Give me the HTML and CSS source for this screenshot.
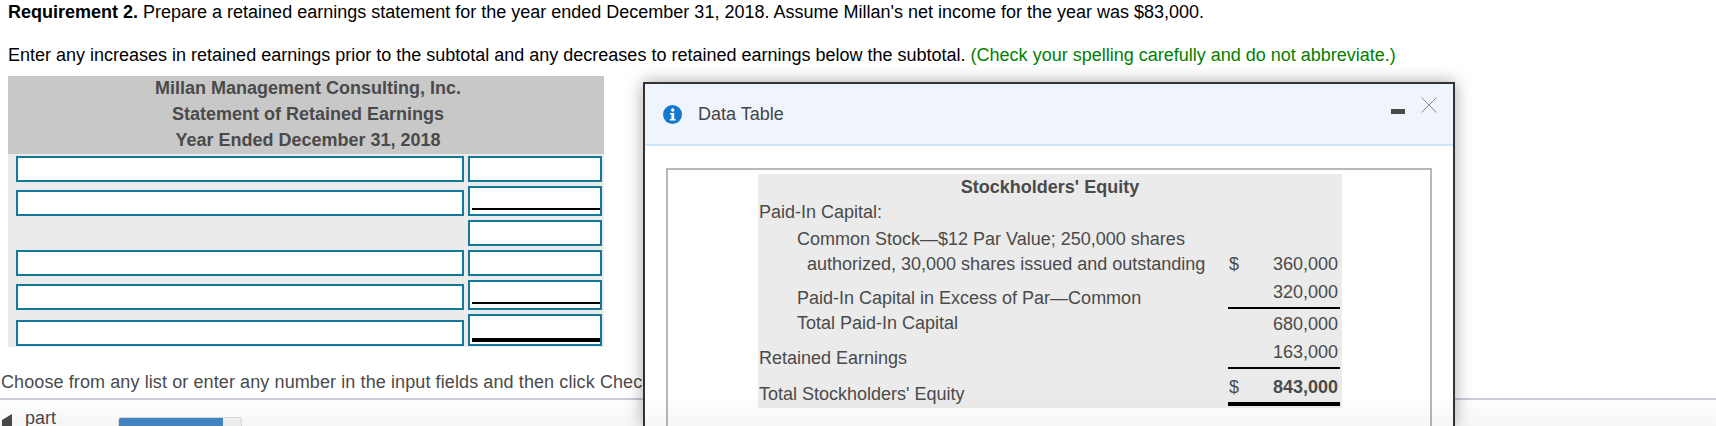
FILE: index.html
```html
<!DOCTYPE html>
<html lang="en">
<head>
    <meta charset="UTF-8">
    <title>Requirement 2</title>
    <link rel="stylesheet" href="styles.css">
</head>
<body>
    <p class="req"><strong>Requirement 2.</strong> Prepare a retained earnings statement for the year ended December 31, 2018. Assume Millan's net income for the year was $83,000.</p>
    <p class="intro">Enter any increases in retained earnings prior to the subtotal and any decreases to retained earnings below the subtotal. <span class="hint">(Check your spelling carefully and do not abbreviate.)</span></p>

    <div class="statement">
        <div class="statement-head">
            <div>Millan Management Consulting, Inc.</div>
            <div>Statement of Retained Earnings</div>
            <div>Year Ended December 31, 2018</div>
        </div>
        <div class="statement-row row-a">
            <div class="field name"></div>
            <div class="field amount"></div>
        </div>
        <div class="statement-row row-b">
            <div class="field name"></div>
            <div class="field amount tall"><i class="rule"></i></div>
        </div>
        <div class="statement-row row-c">
            <div class="field amount only"></div>
        </div>
        <div class="statement-row row-d">
            <div class="field name"></div>
            <div class="field amount"></div>
        </div>
        <div class="statement-row row-e">
            <div class="field name"></div>
            <div class="field amount tall"><i class="rule"></i></div>
        </div>
        <div class="statement-row row-f">
            <div class="field name"></div>
            <div class="field amount taller"><i class="rule thick"></i></div>
        </div>
    </div>

    <p class="choose">Choose from any list or enter any number in the input fields and then click Check Answer.</p>

    <div class="footer">
        <div class="part">
            <svg class="part-arrow" width="12" height="14" viewBox="0 0 12 14"><path d="M1 7 L11 1 V14 H1 Z" fill="#4a4a4a"/></svg>
            <span>part</span>
        </div>
        <div class="progress"><div class="progress-fill"></div></div>
    </div>

    <div class="modal">
        <div class="modal-head">
            <svg class="info" width="19" height="19" viewBox="0 0 19 19">
                <circle cx="9.5" cy="9.5" r="9.5" fill="#1578cc"/>
                <circle cx="9.7" cy="5" r="1.7" fill="#fff"/>
                <path d="M7 8h4.2v6H12.6v1.6H6.8V14h1.6V9.6H7z" fill="#fff"/>
            </svg>
            <span class="modal-title">Data Table</span>
            <span class="minimize"></span>
            <svg class="close" width="16" height="16" viewBox="0 0 16 16"><path d="M.5.5l15 15M15.500.5l-15 15" stroke="#8a8a8a" stroke-width="1" fill="none"/></svg>
        </div>
        <div class="modal-body">
            <div class="panel">
                <table class="equity">
                    <colgroup>
                        <col class="col-label">
                        <col class="col-cur">
                        <col class="col-num">
                        <col class="col-gap">
                    </colgroup>
                    <tr class="r-title"><th colspan="4">Stockholders' Equity</th></tr>
                    <tr class="r-paid"><td colspan="4">Paid-In Capital:</td></tr>
                    <tr class="r-common"><td class="ind" colspan="4">Common Stock—$12 Par Value; 250,000 shares</td></tr>
                    <tr class="r-auth"><td class="ind2">authorized, 30,000 shares issued and outstanding</td><td class="cur">$</td><td class="num">360,000</td><td></td></tr>
                    <tr class="r-low"><td class="ind low">Paid-In Capital in Excess of Par—Common</td><td class="cur line"></td><td class="num line up">320,000</td><td></td></tr>
                    <tr class="r-sub"><td class="ind">Total Paid-In Capital</td><td class="cur"></td><td class="num">680,000</td><td></td></tr>
                    <tr class="r-low2"><td class="low">Retained Earnings</td><td class="cur line"></td><td class="num line up">163,000</td><td></td></tr>
                    <tr class="r-total"><td class="low">Total Stockholders' Equity</td><td class="cur line2 up">$</td><td class="num line2 up"><b>843,000</b></td><td></td></tr>
                    <tr class="r-pad"><td colspan="4"></td></tr>
                </table>
            </div>
        </div>
    </div>
    <div class="fade"></div>
</body>
</html>
```

FILE: styles.css
```css
html, body {
    height: 426px;
    overflow: hidden;
}
body {
    margin: 0;
    font-family: "Liberation Sans", Arial, sans-serif;
    font-size: 18px;
    color: #000;
    background-color: #fff;
    position: relative;
}
p {
    margin: 0;
}
.req {
    padding: 2px 0 0 8px;
    line-height: 20px;
}
.intro {
    padding: 23px 0 0 8px;
    line-height: 20px;
}
.hint {
    color: #008000;
}

/* statement */
.statement {
    width: 596px;
    margin: 11px 0 0 8px;
    background-color: #ebebeb;
    height: 271px;
}
.statement-head {
    background-color: #c8c8c8;
    color: #4a4a4a;
    font-weight: bold;
    text-align: center;
    height: 78px;
    box-sizing: border-box;
    padding-left: 4px;
    display: flex;
    flex-direction: column;
    gap: 2px;
    line-height: 24px;
}
.statement-row {
    display: flex;
    justify-content: flex-end;
    align-items: flex-end;
    gap: 4px;
    padding-right: 2px;
}
.row-a { height: 28px; }
.row-b { height: 34px; }
.row-c { height: 30px; }
.row-d { height: 30px; }
.row-e { height: 34px; }
.row-f { height: 36px; }
.field {
    box-sizing: border-box;
    height: 26px;
    border: 2px solid #13799c;
    background-color: #fff;
    position: relative;
}
.name {
    width: 448px;
}
.amount {
    width: 134px;
}
.tall {
    height: 30px;
}
.taller {
    height: 32px;
}
.rule {
    position: absolute;
    left: 2px;
    right: 0;
    bottom: 4px;
    height: 2px;
    background-color: #000;
}
.rule.thick {
    height: 4px;
    bottom: 2px;
}

.choose {
    position: relative;
    padding: 25px 0 0 1px;
    line-height: 20px;
    letter-spacing: 0.1px;
    color: #4a4a4a;
    white-space: nowrap;
}

/* bottom strip */
.footer {
    position: absolute;
    left: 0;
    right: 0;
    top: 398px;
    height: 28px;
    box-sizing: border-box;
    border-top: 2px solid #c8ccd8;
    display: flex;
    align-items: flex-start;
}
.part {
    width: 118px;
    display: flex;
    align-items: flex-start;
    color: #4a4a4a;
}
.part-arrow {
    margin: 13px 12px 0 1px;
}
.part span {
    line-height: 20px;
    margin-top: 8px;
}
.progress {
    width: 124px;
    height: 20px;
    margin-top: 17px;
    box-sizing: border-box;
    background-color: #f4f4f4;
    border: 1px solid #ddd;
    border-radius: 3px;
    overflow: hidden;
}
.progress-fill {
    width: 104px;
    height: 100%;
    background-color: #4488c8;
}

/* data table window */
.modal {
    position: absolute;
    left: 643px;
    top: 82px;
    width: 812px;
    height: 344px;
    box-sizing: border-box;
    border: 2px solid #333;
    border-bottom: 0;
    background-color: #fff;
    box-shadow: 0 0 16px rgba(0,0,0,0.35);
}
.modal-head {
    box-sizing: border-box;
    height: 62px;
    background-color: #f0f5fd;
    border-bottom: 2px solid #cfe6f8;
    display: flex;
    align-items: center;
    position: relative;
}
.info {
    margin-left: 18px;
}
.modal-title {
    margin-left: 16px;
    color: #444;
}
.minimize {
    position: absolute;
    left: 746px;
    top: 25px;
    width: 14px;
    height: 5px;
    background-color: #4a4a4a;
}
.close {
    position: absolute;
    left: 776px;
    top: 13px;
}
.modal-body {
    padding: 22px 21px 0;
}
.panel {
    border: 2px solid #b8b8b8;
    border-bottom: 0;
    height: 256px;
    padding: 4px 0 0 90px;
}
.equity {
    border-collapse: collapse;
    width: 584px;
    background-color: #ebebeb;
    color: #4a4a4a;
    table-layout: fixed;
}
.col-label { width: 470px; }
.col-cur { width: 32px; }
.col-num { width: 80px; }
.col-gap { width: 2px; }
.equity th, .equity td {
    box-sizing: border-box;
    padding: 0 0 0 1px;
    line-height: 20px;
    white-space: nowrap;
}
.r-title th {
    height: 25px;
    padding: 0;
}
.r-paid td {
    height: 25px;
}
.r-common td {
    height: 27px;
    padding-top: 2px;
}
.r-auth td {
    height: 26px;
}
.equity td.ind {
    padding-left: 39px;
}
.equity td.ind2 {
    padding-left: 49px;
}
.equity td.cur {
    padding-left: 1px;
}
.equity td.num {
    text-align: right;
    padding-left: 0;
    padding-right: 2px;
}
.r-low td {
    height: 31px;
}
.r-sub td {
    height: 28px;
    padding-top: 2px;
}
.r-low2 td {
    height: 32px;
}
.r-total td {
    height: 36px;
}
.r-pad td {
    height: 4px;
    padding: 0;
}
.equity td.low {
    vertical-align: bottom;
}
.equity td.up {
    vertical-align: top;
    padding-top: 5px;
}
.r-low2 td.up {
    padding-top: 6px;
}
.r-total td.up {
    padding-top: 8px;
}
.line {
    border-bottom: 2px solid #000;
}
.line2 {
    border-bottom: 4px solid #000;
}

/* soft fade along the bottom of the window */
.fade {
    position: absolute;
    left: 0;
    right: 0;
    top: 396px;
    height: 30px;
    background: linear-gradient(rgba(0,0,0,0), rgba(0,0,0,0.035));
    pointer-events: none;
}
```
